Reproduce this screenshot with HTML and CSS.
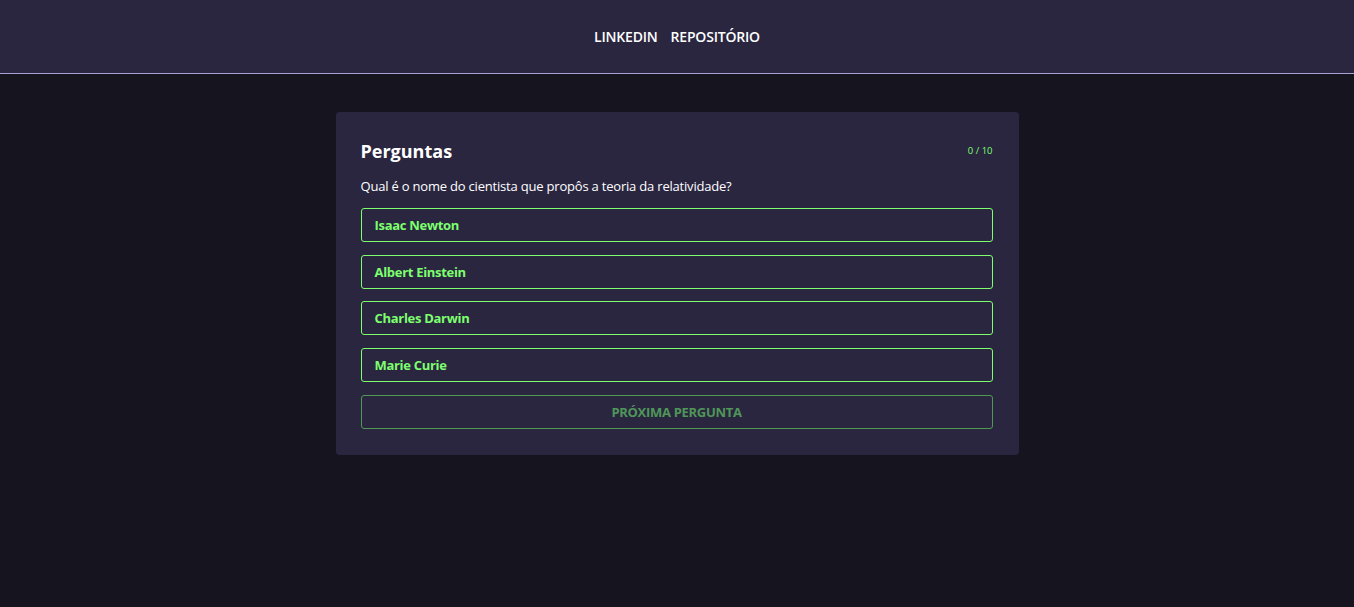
FILE: index.html
```html
<!DOCTYPE html>
<html lang="pt-BR">
<head>
<meta charset="utf-8">
<title>Quiz</title>
<link rel="stylesheet" href="styles.css">
</head>
<body>
<header class="topbar">
  <nav class="nav">
    <a class="nav-link" href="#">LINKEDIN</a>
    <a class="nav-link" href="#">REPOSITÓRIO</a>
  </nav>
</header>
<main class="main">
  <section class="card">
    <div class="card-head">
      <h1 class="title">Perguntas</h1>
      <span class="counter">0 / 10</span>
    </div>
    <p class="question">Qual é o nome do cientista que propôs a teoria da relatividade?</p>
    <div class="options">
      <button class="option">Isaac Newton</button>
      <button class="option">Albert Einstein</button>
      <button class="option">Charles Darwin</button>
      <button class="option">Marie Curie</button>
      <button class="next" disabled>PRÓXIMA PERGUNTA</button>
    </div>
  </section>
</main>
</body>
</html>
```
FILE: styles.css
```css
* { box-sizing: border-box; }
html, body { margin: 0; padding: 0; }
body {
  background: #16141f;
  font-family: "Open Sans", "Noto Sans", sans-serif;
  color: #ffffff;
  min-height: 607px;
}
.topbar {
  height: 74px;
  background: #2a2640;
  border-bottom: 1px solid #a7a3d6;
  display: flex;
  align-items: center;
  justify-content: center;
}
.nav { display: flex; gap: 13px; padding-bottom: 1px; }
.nav-link {
  color: #ffffff;
  text-decoration: none;
  font-weight: 600;
  font-size: 14px;
  letter-spacing: -0.2px;
}
.main {
  display: flex;
  justify-content: center;
  padding-top: 38px;
}
.card {
  width: 683px;
  background: #2a2640;
  border-radius: 4px;
  padding: 27px 26px 26px 25px;
}
.card-head {
  display: flex;
  justify-content: space-between;
  align-items: center;
}
.title {
  margin: 0;
  font-size: 18px;
  font-weight: 700;
  line-height: 24px;
}
.counter {
  color: #7dff6e;
  font-size: 9.5px;
  margin-top: -2px;
}
.question {
  margin: 14px 0 13px;
  font-size: 13px;
  line-height: 18px;
  letter-spacing: -0.2px;
}
.options {
  display: flex;
  flex-direction: column;
  gap: 12.7px;
}
.option, .next {
  height: 34px;
  width: 100%;
  background: transparent;
  border-radius: 3px;
  font-family: inherit;
  font-weight: 700;
  font-size: 13px;
  letter-spacing: -0.3px;
  cursor: pointer;
}
.option {
  border: 1px solid #7dff6e;
  color: #7dff6e;
  text-align: left;
  padding: 0 13px;
}
.next {
  border: 1px solid #4f9a52;
  color: #4f9658;
  text-align: center;
}
```
